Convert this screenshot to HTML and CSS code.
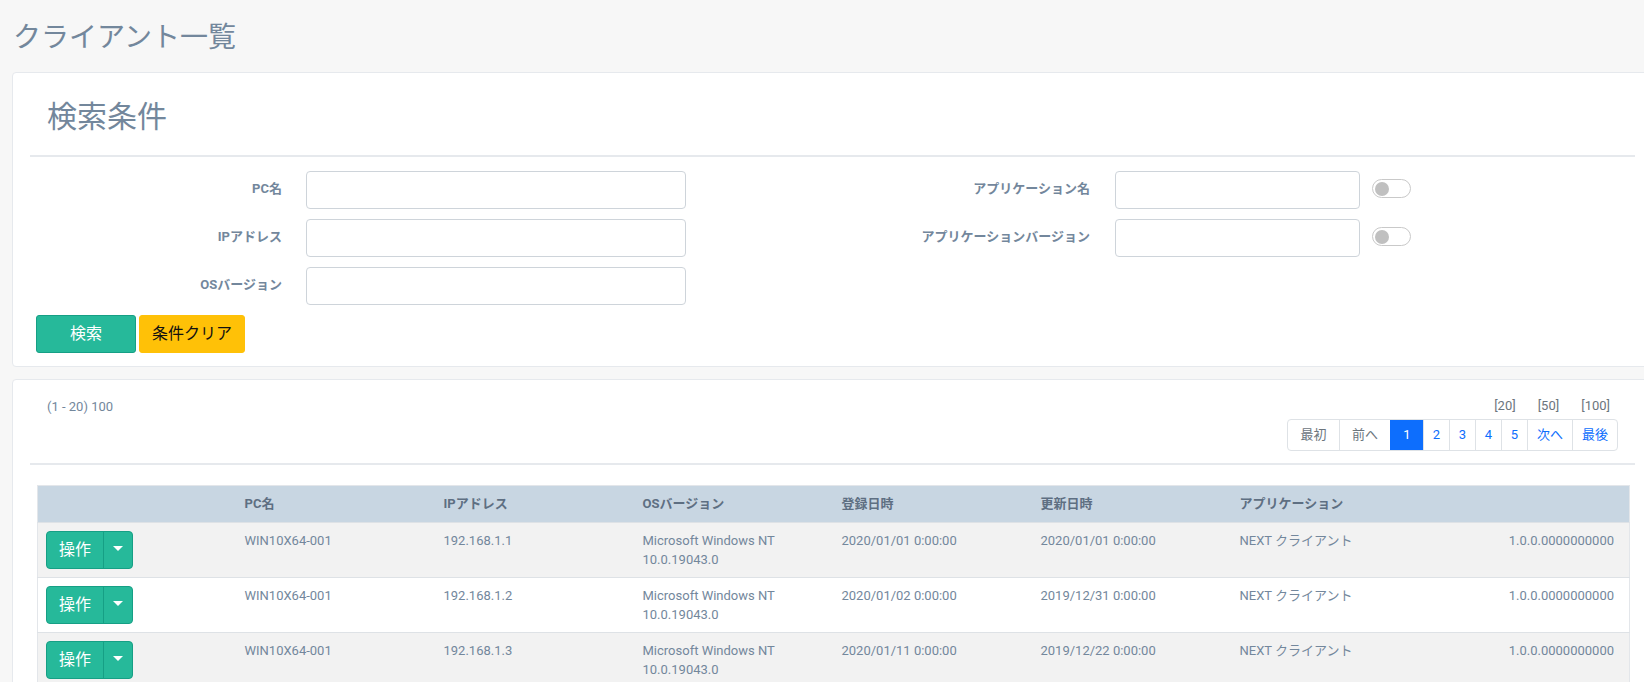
FILE: index.html
```html
<!DOCTYPE html>
<html lang="ja">
<head>
<meta charset="utf-8">
<title>クライアント一覧</title>
<link rel="stylesheet" href="styles.css">
</head>
<body>
<div class="page">
  <h3 class="page-title">クライアント一覧</h3>

  <section class="panel search-panel">
    <div class="panel-title"><h2>検索条件</h2></div>
    <form class="search-form">
      <div class="form-cols">
        <div class="form-col col-left">
          <div class="form-row"><label class="form-label lbl-left">PC名</label><input class="form-input in-wide" type="text"></div>
          <div class="form-row"><label class="form-label lbl-left">IPアドレス</label><input class="form-input in-wide" type="text"></div>
          <div class="form-row"><label class="form-label lbl-left">OSバージョン</label><input class="form-input in-wide" type="text"></div>
        </div>
        <div class="form-col col-right">
          <div class="form-row"><label class="form-label lbl-right">アプリケーション名</label><input class="form-input in-narrow" type="text"><span class="toggle"><span class="knob"></span></span></div>
          <div class="form-row"><label class="form-label lbl-right">アプリケーションバージョン</label><input class="form-input in-narrow" type="text"><span class="toggle"><span class="knob"></span></span></div>
        </div>
      </div>
      <div class="form-actions">
        <button type="button" class="btn btn-green btn-search">検索</button>
        <button type="button" class="btn btn-yellow btn-clear">条件クリア</button>
      </div>
    </form>
  </section>

  <section class="panel list-panel">
    <div class="list-head">
      <div class="count">(1 - 20) 100</div>
      <div class="paging">
        <div class="sizes"><a class="size-link">[20]</a><a class="size-link">[50]</a><a class="size-link">[100]</a></div>
        <ul class="pagination">
          <li class="pg pg-wide pg-disabled">最初</li>
          <li class="pg pg-wide pg-disabled">前へ</li>
          <li class="pg pg-active">1</li>
          <li class="pg pg-num">2</li>
          <li class="pg pg-num">3</li>
          <li class="pg pg-num">4</li>
          <li class="pg pg-num">5</li>
          <li class="pg pg-mid">次へ</li>
          <li class="pg pg-mid">最後</li>
        </ul>
      </div>
    </div>

    <table class="data-table">
      <colgroup>
        <col class="c"><col class="c"><col class="c"><col class="c"><col class="c"><col class="c"><col class="c"><col class="c">
      </colgroup>
      <thead>
        <tr><th></th><th>PC名</th><th>IPアドレス</th><th>OSバージョン</th><th>登録日時</th><th>更新日時</th><th>アプリケーション</th><th></th></tr>
      </thead>
      <tbody>
        <tr>
          <td><div class="split-btn"><span class="split-main">操作</span><span class="split-caret"><span class="caret"></span></span></div></td>
          <td>WIN10X64-001</td><td>192.168.1.1</td><td>Microsoft Windows NT 10.0.19043.0</td><td>2020/01/01 0:00:00</td><td>2020/01/01 0:00:00</td><td>NEXT クライアント</td><td class="num">1.0.0.0000000000</td>
        </tr>
        <tr>
          <td><div class="split-btn"><span class="split-main">操作</span><span class="split-caret"><span class="caret"></span></span></div></td>
          <td>WIN10X64-001</td><td>192.168.1.2</td><td>Microsoft Windows NT 10.0.19043.0</td><td>2020/01/02 0:00:00</td><td>2019/12/31 0:00:00</td><td>NEXT クライアント</td><td class="num">1.0.0.0000000000</td>
        </tr>
        <tr>
          <td><div class="split-btn"><span class="split-main">操作</span><span class="split-caret"><span class="caret"></span></span></div></td>
          <td>WIN10X64-001</td><td>192.168.1.3</td><td>Microsoft Windows NT 10.0.19043.0</td><td>2020/01/11 0:00:00</td><td>2019/12/22 0:00:00</td><td>NEXT クライアント</td><td class="num">1.0.0.0000000000</td>
        </tr>
      </tbody>
    </table>
  </section>
</div>
</body>
</html>
```

FILE: styles.css
```css
html {
  overflow: hidden;
}
body {
  margin: 0;
  background: #f7f7f7;
  font-family: Roboto, "Noto Sans CJK JP", sans-serif;
  font-size: 13px;
  color: #73879c;
}
.page {
  width: 1641px;
  padding-left: 12px;
}
.page-title {
  margin: 21px 0 17px 1px;
  font-size: 28px;
  line-height: 34px;
  font-weight: 400;
  color: #73879c;
}
.panel {
  box-sizing: border-box;
  background: #fff;
  border: 1px solid #e6e9ed;
  border-radius: 4px;
  padding: 10px 17px;
}
.search-panel {
  margin-bottom: 12px;
}
.panel-title {
  padding: 16px 0 20px 17px;
  border-bottom: 2px solid #e6e9ed;
}
.panel-title h2 {
  margin: 0;
  font-size: 30px;
  line-height: 36px;
  font-weight: 400;
  color: #73879c;
}
.search-form {
  margin-top: 14px;
}
.form-cols {
  display: flex;
}
.col-left {
  width: 802px;
}
.form-row {
  display: flex;
  align-items: flex-start;
  height: 38px;
  margin-bottom: 10px;
}
.form-label {
  box-sizing: border-box;
  text-align: right;
  font-weight: 700;
  font-size: 13px;
  line-height: 20px;
  padding-top: 8px;
  color: #73879c;
}
.lbl-left {
  width: 252px;
  margin-right: 24px;
}
.lbl-right {
  width: 258px;
  margin-right: 25px;
}
.form-input {
  box-sizing: border-box;
  height: 38px;
  border: 1px solid #ced4da;
  border-radius: 4px;
  background: #fff;
  margin: 0;
  padding: 0 12px;
  font: inherit;
}
.in-wide {
  width: 380px;
}
.in-narrow {
  width: 245px;
  margin-right: 12px;
}
.toggle {
  box-sizing: border-box;
  display: flex;
  align-items: center;
  width: 39px;
  height: 19px;
  margin-top: 8px;
  border: 1px solid #c9c9c9;
  border-radius: 10px;
  padding-left: 2px;
  background: #fff;
}
.knob {
  width: 14px;
  height: 14px;
  border-radius: 50%;
  background: #c0c0c0;
}
.form-actions {
  display: flex;
  margin-bottom: 3px;
}
.btn {
  box-sizing: border-box;
  height: 38px;
  border-radius: 3px;
  font-family: Roboto, "Noto Sans CJK JP", sans-serif;
  font-size: 16px;
  line-height: 20px;
  padding: 0;
  cursor: pointer;
}
.btn-green {
  background: #26b99a;
  border: 1px solid #169f85;
  color: #fff;
}
.btn-yellow {
  background: #ffc107;
  border: 1px solid #ffc107;
  color: #111;
}
.btn-search {
  width: 100px;
  margin-left: 6px;
}
.btn-clear {
  width: 106px;
  margin-left: 3px;
}

.list-head {
  display: flex;
  justify-content: space-between;
  border-bottom: 2px solid #e6e9ed;
  padding-bottom: 12px;
}
.count {
  padding: 7px 0 0 17px;
  line-height: 20px;
}
.paging {
  display: flex;
  flex-direction: column;
  align-items: flex-end;
  margin-right: 17px;
}
.sizes {
  display: flex;
  gap: 22px;
  padding-top: 6px;
  padding-right: 8px;
  line-height: 20px;
}
.size-link {
  color: #6c757d;
}
.pagination {
  display: flex;
  margin: 3px 0 0;
  padding: 0;
  list-style: none;
  border: 1px solid #dee2e6;
  border-radius: 4px;
  overflow: hidden;
}
.pg {
  box-sizing: border-box;
  height: 30px;
  line-height: 30px;
  text-align: center;
  border-left: 1px solid #dee2e6;
  color: #0d6efd;
  font-size: 13px;
}
.pg:first-child {
  border-left: 0;
}
.pg-disabled {
  color: #6c757d;
}
.pg-wide {
  width: 51px;
}
.pg-active {
  width: 33px;
  background: #0d6efd;
  border-left-color: #0d6efd;
  color: #fff;
}
.pg-num {
  width: 26px;
}
.pg-mid {
  width: 45px;
}

.data-table {
  margin: 20px 0 0 7px;
  width: 1592px;
  table-layout: fixed;
  border-collapse: collapse;
  border: 1px solid #e3e6ea;
}
.data-table col.c {
  width: 199px;
}
.data-table th {
  background: #c8d6e2;
  color: #5e6f82;
  font-weight: 700;
  text-align: left;
  padding: 8px;
  line-height: 20px;
  border-bottom: 1px solid #dee2e6;
}
.data-table td {
  padding: 8px;
  line-height: 19px;
  vertical-align: top;
  border-top: 1px solid #dee2e6;
  color: #73879c;
}
.data-table tbody tr:nth-child(odd) td {
  background: #f2f2f2;
}
.data-table tbody tr:nth-child(even) td {
  background: #fff;
}
.data-table td.num {
  text-align: right;
  padding-right: 15px;
}
.split-btn {
  display: flex;
  width: 87px;
  height: 38px;
  box-sizing: border-box;
  background: #26b99a;
  border: 1px solid #169f85;
  border-radius: 4px;
  color: #fff;
}
.split-main {
  width: 56px;
  font-size: 16px;
  line-height: 36px;
  text-align: center;
}
.split-caret {
  flex: 1;
  display: flex;
  align-items: center;
  justify-content: center;
  border-left: 1px solid #169f85;
}
.caret {
  width: 0;
  height: 0;
  margin-top: -3px;
  border-top: 5px solid #fff;
  border-left: 5px solid transparent;
  border-right: 5px solid transparent;
}
```
